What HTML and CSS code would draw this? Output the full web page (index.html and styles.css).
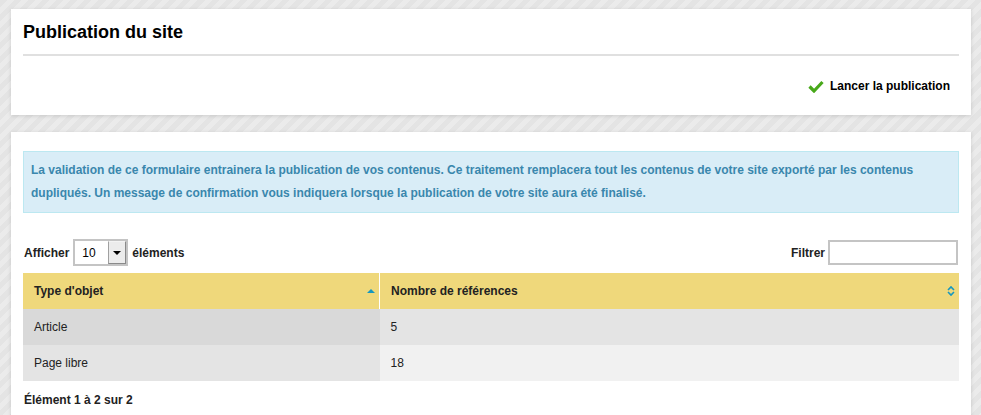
FILE: index.html
```html
<!DOCTYPE html>
<html lang="fr">
<head>
  <meta charset="UTF-8" />
  <title>Publication du site</title>
  <link rel="stylesheet" href="styles.css">
</head>
<body>
  <div class="page">
    <div class="card">
      <h2 class="card-title">Publication du site</h2>
      <div class="actions">
        <a href="#" class="btn-publish">
          <svg class="check" width="16" height="13" viewBox="0 0 16 13">
            <path d="M1.5 6.5 L6 11 L14.5 2" fill="none" stroke="#48a81a" stroke-width="3.2"/>
          </svg>
          Lancer la publication
        </a>
      </div>
    </div>

    <div class="card card-list">
      <div class="alert-info">
        La validation de ce formulaire entrainera la publication de vos contenus. Ce traitement remplacera tout les contenus de votre site exporté par les contenus dupliqués. Un message de confirmation vous indiquera lorsque la publication de votre site aura été finalisé.
      </div>

      <div class="toolbar">
        <div class="length">
          Afficher
          <label class="select-wrap">
            <select>
              <option>10</option>
              <option>25</option>
              <option>50</option>
            </select>
            <span class="select-btn"><span class="caret"></span></span>
          </label>
          éléments
        </div>
        <div class="filter">
          Filtrer <input type="text">
        </div>
      </div>

      <table class="grid">
        <thead>
          <tr>
            <th class="sorted">Type d'objet
              <svg class="sort-icon" width="8" height="5" viewBox="0 0 8 5"><path d="M0 4.5 L4 0.5 L8 4.5 Z" fill="#1697bf"/></svg>
            </th>
            <th>Nombre de références
              <svg class="sort-icon" width="8" height="11" viewBox="0 0 8 11"><path d="M1 4.5 L4 1.5 L7 4.5 M1 6.5 L4 9.5 L7 6.5" fill="none" stroke="#1697bf" stroke-width="1.6"/></svg>
            </th>
          </tr>
        </thead>
        <tbody>
          <tr class="odd">
            <td class="sorted">Article</td>
            <td>5</td>
          </tr>
          <tr class="even">
            <td class="sorted">Page libre</td>
            <td>18</td>
          </tr>
        </tbody>
      </table>

      <div class="info">Élément 1 à 2 sur 2</div>
    </div>
  </div>
</body>
</html>
```

FILE: styles.css
```css
body {
  margin: 0;
  font-family: "Liberation Sans", Arial, sans-serif;
  font-size: 12px;
  color: #222;
  background: repeating-linear-gradient(135deg, #e4e4e4 0 5px, #ebebeb 5px 10px);
  min-height: 100vh;
}

.page {
  padding: 9px 10px 0 11px;
}

.card {
  background: #fff;
  padding: 0 12px;
  box-shadow: 0 1px 4px rgba(0, 0, 0, 0.13);
}

.card + .card {
  margin-top: 17px;
}

.card-title {
  margin: 0;
  padding: 12px 0 11px;
  font-size: 18px;
  line-height: 22px;
  color: #000;
  border-bottom: 2px solid #e0e0e0;
}

.actions {
  display: flex;
  justify-content: flex-end;
  padding: 16px 0 15px;
}

.btn-publish {
  display: inline-flex;
  align-items: center;
  gap: 6px;
  padding: 6px 9px 6px 0;
  line-height: 16px;
  font-weight: bold;
  color: #000;
  text-decoration: none;
}

.check {
  margin-top: 1px;
}

.card-list {
  padding-top: 19px;
  padding-bottom: 40px;
}

.alert-info {
  background: #d9edf7;
  border: 1px solid #bce8f1;
  color: #3a87ad;
  font-weight: bold;
  line-height: 23px;
  padding: 7px 7px;
}

.toolbar {
  display: flex;
  justify-content: space-between;
  align-items: center;
  margin: 26px 0 7px;
  font-weight: bold;
}

.length,
.filter {
  display: flex;
  align-items: center;
  gap: 4px;
  padding-left: 1px;
}

.select-wrap {
  position: relative;
  display: inline-block;
  width: 55px;
  height: 27px;
  box-sizing: border-box;
  border: 2px solid #c4c4c4;
  background: #fff;
}

.select-wrap select {
  appearance: none;
  border: none;
  background: transparent;
  width: 100%;
  height: 100%;
  padding: 0 0 0 7px;
  font-family: inherit;
  font-size: 12px;
  color: #000;
  outline: none;
}

.select-btn {
  position: absolute;
  top: 0;
  right: 0;
  bottom: 0;
  width: 16px;
  background: #ececec;
  border: 1px solid #8a8a8a;
  border-top-color: #f4f4f4;
  border-left-color: #a0a0a0;
  display: flex;
  align-items: center;
  justify-content: center;
}

.caret {
  width: 0;
  height: 0;
  border-left: 4px solid transparent;
  border-right: 4px solid transparent;
  border-top: 4px solid #000;
}

.filter {
  gap: 3px;
  padding-right: 1px;
}

.filter input {
  width: 130px;
  height: 25px;
  box-sizing: border-box;
  border: 2px solid #c4c4c4;
  font-family: inherit;
  font-size: 12px;
  outline: none;
}

.grid {
  width: 100%;
  border-collapse: collapse;
}

.grid th {
  background: #efd87b;
  text-align: left;
  font-weight: bold;
  height: 36px;
  padding: 0 4px 0 11px;
  position: relative;
}

.grid th:first-child {
  width: 341px;
  border-right: 1px solid #fff;
}

.sort-icon {
  position: absolute;
  right: 4px;
  top: 50%;
  transform: translateY(-50%);
}

.grid td {
  height: 36px;
  padding: 0 11px;
}

.grid tr.odd td { background: #e4e4e4; }
.grid tr.odd td.sorted { background: #d9d9d9; }
.grid tr.even td { background: #f1f1f1; }
.grid tr.even td.sorted { background: #e4e4e4; }

.info {
  padding: 11px 1px 0;
  font-weight: bold;
  line-height: 16px;
}
```
